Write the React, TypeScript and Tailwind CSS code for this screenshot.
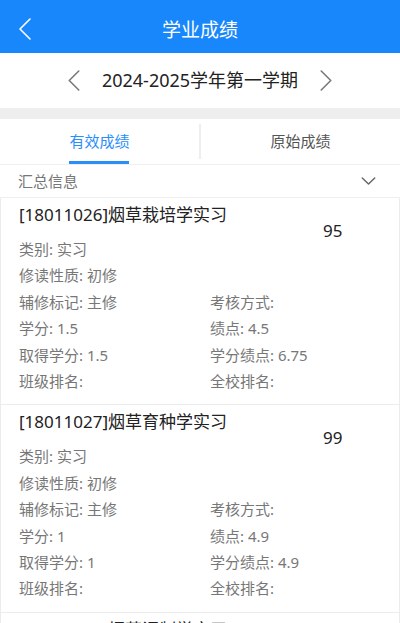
import React from 'react'

type Course = {
  title: string
  score: string
  credit: string
  gpa: string
  earned: string
  creditGpa: string
}

const courses: Course[] = [
  { title: '[18011026]烟草栽培学实习', score: '95', credit: '1.5', gpa: '4.5', earned: '1.5', creditGpa: '6.75' },
  { title: '[18011027]烟草育种学实习', score: '99', credit: '1', gpa: '4.9', earned: '1', creditGpa: '4.9' },
  { title: '[18011028]烟草调制学实习', score: '96', credit: '1', gpa: '4.6', earned: '1', creditGpa: '4.6' },
]

function Chevron({ dir, className }: { dir: 'left' | 'right' | 'down'; className?: string }) {
  const d = dir === 'left' ? 'M11 1 L1 11 L11 21' : dir === 'right' ? 'M1 1 L11 11 L1 21' : 'M1 1 L8 8 L15 1'
  const box = dir === 'down' ? '0 0 16 9' : '0 0 12 22'
  return (
    <svg viewBox={box} className={className} fill="none" stroke="currentColor" strokeWidth="1.6" strokeLinecap="round" strokeLinejoin="round">
      <path d={d} />
    </svg>
  )
}

function CourseCard({ course }: { course: Course }) {
  const rows: [string, string][] = [
    ['辅修标记: 主修', '考核方式:'],
    [`学分: ${course.credit}`, `绩点: ${course.gpa}`],
    [`取得学分: ${course.earned}`, `学分绩点: ${course.creditGpa}`],
    ['班级排名:', '全校排名:'],
  ]
  return (
    <div className="flex border-x border-b border-[#ececec] bg-white pb-[10px] pl-[18px] pt-[5px]">
      <div className="flex w-[304px] flex-col">
        <div className="text-[17px] leading-[24px] text-[#222]">{course.title}</div>
        <div className="mt-[9px] text-[15px] leading-[26.4px] text-[#777]">
          <div>类别: 实习</div>
          <div>修读性质: 初修</div>
          {rows.map(([a, b]) => (
            <div key={a} className="grid grid-cols-[191px_1fr]">
              <div>{a}</div>
              <div>{b}</div>
            </div>
          ))}
        </div>
      </div>
      <div className="pt-[16px] text-[17px] leading-[24px] text-[#222]">{course.score}</div>
    </div>
  )
}

export default function App() {
  return (
    <div
      className="h-[623px] w-[400px] overflow-hidden bg-white"
      style={{ fontFamily: '"Noto Sans", "Noto Sans CJK SC", sans-serif' }}
    >
      <header className="relative flex h-[53px] items-center justify-center bg-[#1787fb] pt-[8px]">
        <Chevron dir="left" className="absolute left-[19px] top-[18px] h-[22px] w-[12px] text-white" />
        <div className="text-[19px] text-white">学业成绩</div>
      </header>

      <div className="flex h-[55px] items-center justify-center gap-[20px]">
        <Chevron dir="left" className="h-[21px] w-[12px] text-[#777]" />
        <div className="w-[200px] text-center text-[18px] text-[#222]">2024-2025学年第一学期</div>
        <Chevron dir="right" className="h-[21px] w-[12px] text-[#777]" />
      </div>

      <div className="h-[11px] bg-[#eeeeee]" />

      <div className="flex h-[46px] border-b border-[#efefef]">
        <div className="relative flex flex-1 items-center justify-center">
          <span className="text-[15px] text-[#2a8ef8]">有效成绩</span>
          <span className="absolute bottom-0 left-[69px] h-[3px] w-[60px] bg-[#2a8ef8]" />
        </div>
        <div className="my-[5px] w-[2px] bg-[#eeeeee]" />
        <div className="flex flex-1 items-center justify-center">
          <span className="text-[15px] text-[#555]">原始成绩</span>
        </div>
      </div>

      <div className="flex h-[33px] items-center justify-between border-b border-[#efefef] pl-[18px] pr-[24px]">
        <span className="text-[15px] text-[#777]">汇总信息</span>
        <Chevron dir="down" className="h-[8px] w-[15px] text-[#666]" />
      </div>

      {courses.map((c) => (
        <CourseCard key={c.title} course={c} />
      ))}
    </div>
  )
}
